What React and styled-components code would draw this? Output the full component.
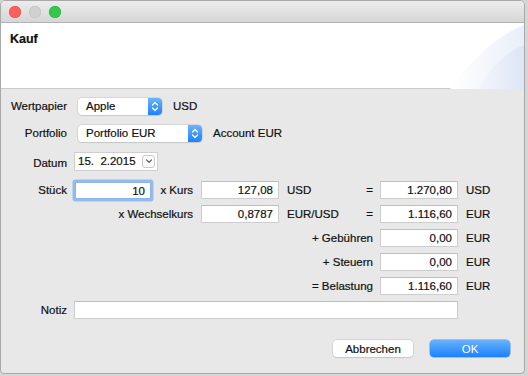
import React from "react";
import styled, { createGlobalStyle } from "styled-components";

const Global = createGlobalStyle`
  html, body { margin: 0; padding: 0; background: #d6d6d6; }
  body { font-family: "Liberation Sans", Arial, sans-serif; font-size: 11.5px; color: #111; -webkit-text-stroke: 0.2px currentColor; }
  * { box-sizing: border-box; }
`;

const Window = styled.div`
  width: 525px;
  height: 374px;
  border: 1px solid #a9a9a9;
  border-radius: 5px 5px 4px 4px;
  overflow: hidden;
  background: #e8e8e8;
  display: flex;
  flex-direction: column;
`;

const TitleBar = styled.div`
  height: 22px;
  flex: none;
  background: linear-gradient(#ececec, #d6d6d6);
  border-bottom: 1px solid #b3b3b3;
  display: flex;
  align-items: center;
  gap: 8px;
  padding-left: 8px;
`;

const Light = styled.span`
  width: 12px;
  height: 12px;
  border-radius: 50%;
  background: ${(p) => p.$color};
  box-shadow: inset 0 0 0 0.5px ${(p) => p.$edge};
`;

const Header = styled.div`
  position: relative;
  height: 66px;
  flex: none;
  background: #fff;
  border-bottom: 1px solid #c9c9c9;
  padding: 9px 9px;
`;

const Title = styled.div`
  font-weight: bold;
  font-size: 12.5px;
  color: #111;
`;

const Swoosh = styled.svg`
  position: absolute;
  right: 0;
  top: 0;
`;

const Form = styled.div`
  padding-top: 8px;
  display: flex;
  flex-direction: column;
`;

const TopRows = styled.div`
  display: flex;
  flex-direction: column;
  gap: 9px;
`;

const Row = styled.div`
  display: flex;
  align-items: center;
  height: ${(p) => p.$h || 18}px;
`;

const RowLabel = styled.div`
  width: 66px;
  text-align: right;
  flex: none;
  margin-right: ${(p) => p.$gap ?? 11}px;
  ${(p) => p.$shift && `padding-top: ${p.$shift}px;`}
`;

const Popup = styled.div`
  width: ${(p) => p.$w}px;
  height: 17px;
  display: flex;
  align-items: center;
  background: #fff;
  border-radius: 4px;
  box-shadow: 0 0 0 0.5px #c4c4c4, 0 1px 1px rgba(0,0,0,0.12);
  overflow: hidden;
`;

const PopupText = styled.span`
  flex: 1;
  padding-left: 8px;
`;

const Stepper = styled.span`
  width: 14px;
  height: 100%;
  background: linear-gradient(#6cb3fb, #1c83fb);
  display: flex;
  align-items: center;
  justify-content: center;
`;

const Unit = styled.span`
  margin-left: 11px;
`;

const DateField = styled.div`
  width: 84px;
  height: 19px;
  background: #fff;
  border: 1px solid #cfcfcf;
  display: flex;
  align-items: center;
  padding-left: 3px;
  padding-right: 2px;
  justify-content: space-between;
`;

const DateStep = styled.span`
  width: 13px;
  height: 13px;
  border-radius: 3px;
  border: 1px solid #c9c9c9;
  display: flex;
  align-items: center;
  justify-content: center;
  background: #fbfbfb;
`;

const Calc = styled.div`
  margin-top: 7px;
  display: grid;
  grid-template-columns: 66px 86px 41px 85px 80px 14px 85px auto;
  grid-auto-rows: 24px;
  align-items: center;
`;

const Cell = styled.div`
  grid-column: ${(p) => p.$col};
  text-align: ${(p) => p.$align || "left"};
  padding-left: ${(p) => p.$pl || 0}px;
  padding-right: ${(p) => p.$pr || 0}px;
  white-space: nowrap;
`;

const Field = styled.div`
  grid-column: ${(p) => p.$col};
  justify-self: end;
  width: ${(p) => p.$w || 78}px;
  height: 18px;
  background: #fff;
  border: 1px solid ${(p) => (p.$focus ? "#8bb4e8" : "#cdcdcd")};
  border-top-color: ${(p) => (p.$focus ? "#8bb4e8" : "#bdbdbd")};
  box-shadow: ${(p) => (p.$focus ? "0 0 0 2.5px #92bbee" : "none")};
  border-radius: ${(p) => (p.$focus ? "1px" : "0")};
  text-align: right;
  padding-right: 5px;
  line-height: 16px;
  ${(p) => p.$focus && "margin-right: 2px; width: 76px; height: 17px;"}
`;

const Buttons = styled.div`
  margin-top: 18px;
  display: flex;
  justify-content: flex-end;
  gap: 17px;
  padding-right: 14px;
`;

const Button = styled.div`
  width: 80px;
  height: 17px;
  border-radius: 4px;
  display: flex;
  align-items: center;
  justify-content: center;
  background: ${(p) => (p.$primary ? "linear-gradient(#69b1fd, #1a82fb)" : "#fff")};
  color: ${(p) => (p.$primary ? "#fff" : "#111")};
  -webkit-text-stroke: ${(p) => (p.$primary ? "0" : "0.2px currentColor")};
  box-shadow: ${(p) =>
    p.$primary ? "0 0 0 0.5px #4a97f5" : "0 0 0 0.5px #c2c2c2, 0 1px 1px rgba(0,0,0,0.12)"};
`;

const UpDown = () => (
  <svg width="8" height="11" viewBox="0 0 8 11">
    <path d="M1.5 4 L4 1.5 L6.5 4 M1.5 7 L4 9.5 L6.5 7" fill="none" stroke="#fff" strokeWidth="1.2" strokeLinecap="round" strokeLinejoin="round" />
  </svg>
);

const Down = () => (
  <svg width="8" height="6" viewBox="0 0 8 6">
    <path d="M1.5 1.8 L4 4.3 L6.5 1.8" fill="none" stroke="#555" strokeWidth="1.2" strokeLinecap="round" strokeLinejoin="round" />
  </svg>
);

export default function App() {
  return (
    <>
      <Global />
      <Window>
        <TitleBar>
          <Light $color="#fc605b" $edge="#de4a45" />
          <Light $color="#d0d0d0" $edge="#bdbdbd" />
          <Light $color="#34c749" $edge="#25a836" />
        </TitleBar>
        <Header>
          <Title>Kauf</Title>
          <Swoosh width="80" height="66" viewBox="0 0 80 66">
            <defs>
              <linearGradient id="g1" x1="0" y1="0" x2="1" y2="0">
                <stop offset="0" stopColor="#ffffff" />
                <stop offset="1" stopColor="#e9eef9" />
              </linearGradient>
              <linearGradient id="g2" x1="0" y1="0" x2="1" y2="0">
                <stop offset="0" stopColor="#f4f6fc" />
                <stop offset="1" stopColor="#dde4f4" />
              </linearGradient>
            </defs>
            <path d="M6 66 C25 40 50 14 80 2 L80 66 Z" fill="url(#g1)" />
            <path d="M34 66 C46 46 60 30 80 22 L80 66 Z" fill="url(#g2)" />
          </Swoosh>
        </Header>
        <Form>
          <TopRows>
            <Row>
              <RowLabel>Wertpapier</RowLabel>
              <Popup $w={84}>
                <PopupText>Apple</PopupText>
                <Stepper><UpDown /></Stepper>
              </Popup>
              <Unit>USD</Unit>
            </Row>
            <Row>
              <RowLabel>Portfolio</RowLabel>
              <Popup $w={124}>
                <PopupText>Portfolio EUR</PopupText>
                <Stepper><UpDown /></Stepper>
              </Popup>
              <Unit>Account EUR</Unit>
            </Row>
            <Row $h={20}>
              <RowLabel $gap={7} $shift={3}>Datum</RowLabel>
              <DateField>
                <span>15.&#8199;2.2015</span>
                <DateStep><Down /></DateStep>
              </DateField>
            </Row>
          </TopRows>
          <Calc>
            <Cell $col="1" $align="right">Stück</Cell>
            <Field $col="2" $focus>10</Field>
            <Cell $col="3" $align="right" $pr={1}>x Kurs</Cell>
            <Field $col="4">127,08</Field>
            <Cell $col="5" $pl={8}>USD</Cell>
            <Cell $col="6" $align="right">=</Cell>
            <Field $col="7">1.270,80</Field>
            <Cell $col="8" $pl={8}>USD</Cell>

            <Cell $col="2 / 4" $align="right" $pr={1}>x Wechselkurs</Cell>
            <Field $col="4">0,8787</Field>
            <Cell $col="5" $pl={8}>EUR/USD</Cell>
            <Cell $col="6" $align="right">=</Cell>
            <Field $col="7">1.116,60</Field>
            <Cell $col="8" $pl={8}>EUR</Cell>

            <Cell $col="5 / 7" $align="right">+ Gebühren</Cell>
            <Field $col="7">0,00</Field>
            <Cell $col="8" $pl={8}>EUR</Cell>

            <Cell $col="5 / 7" $align="right">+ Steuern</Cell>
            <Field $col="7">0,00</Field>
            <Cell $col="8" $pl={8}>EUR</Cell>

            <Cell $col="5 / 7" $align="right">= Belastung</Cell>
            <Field $col="7">1.116,60</Field>
            <Cell $col="8" $pl={8}>EUR</Cell>

            <Cell $col="1" $align="right">Notiz</Cell>
            <Field $col="2 / 8" $w={384}></Field>
          </Calc>
          <Buttons>
            <Button>Abbrechen</Button>
            <Button $primary>OK</Button>
          </Buttons>
        </Form>
      </Window>
    </>
  );
}
